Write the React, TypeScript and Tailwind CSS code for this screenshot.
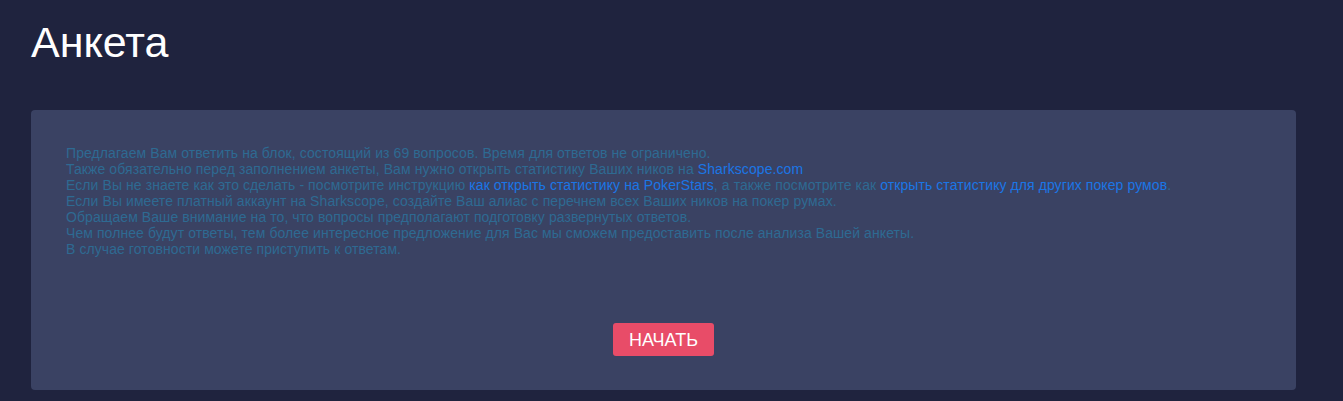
import React from 'react'

const App = () => {
    return (
        <div className="w-full min-h-[401px] bg-[#1f233e] pl-[31px] pr-[47px] pt-[18px] pb-3 font-['Liberation_Sans',Arial,sans-serif]">
            <h1 className="text-[43px] leading-[48px] text-white">Анкета</h1>

            <div className="mt-[44px] bg-[#3a4263] rounded-[4px] px-[35px] pt-[35px] pb-[34px] flex flex-col">
                <div className="text-[14px] leading-[16px] tracking-[0.08px] text-[#2e6a92]">
                    <div>Предлагаем Вам ответить на блок, состоящий из 69 вопросов. Время для ответов не ограничено.</div>
                    <div>Также обязательно перед заполнением анкеты, Вам нужно открыть статистику Ваших ников на <a className="text-[#1b76e6]">Sharkscope.com</a></div>
                    <div>Если Вы не знаете как это сделать - посмотрите инструкцию <a className="text-[#1b76e6]">как открыть статистику на PokerStars</a>, а также посмотрите как <a className="text-[#1b76e6]">открыть статистику для других покер румов</a>.</div>
                    <div>Если Вы имеете платный аккаунт на Sharkscope, создайте Ваш алиас с перечнем всех Ваших ников на покер румах.</div>
                    <div>Обращаем Ваше внимание на то, что вопросы предполагают подготовку развернутых ответов.</div>
                    <div>Чем полнее будут ответы, тем более интересное предложение для Вас мы сможем предоставить после анализа Вашей анкеты.</div>
                    <div>В случае готовности можете приступить к ответам.</div>
                </div>

                <div className="flex justify-center mt-[66px]">
                    <button className="w-[101px] h-[33px] rounded-[3px] bg-[#e84c68] text-white text-[18px] leading-none">НАЧАТЬ</button>
                </div>
            </div>
        </div>
    )
}

export default App
